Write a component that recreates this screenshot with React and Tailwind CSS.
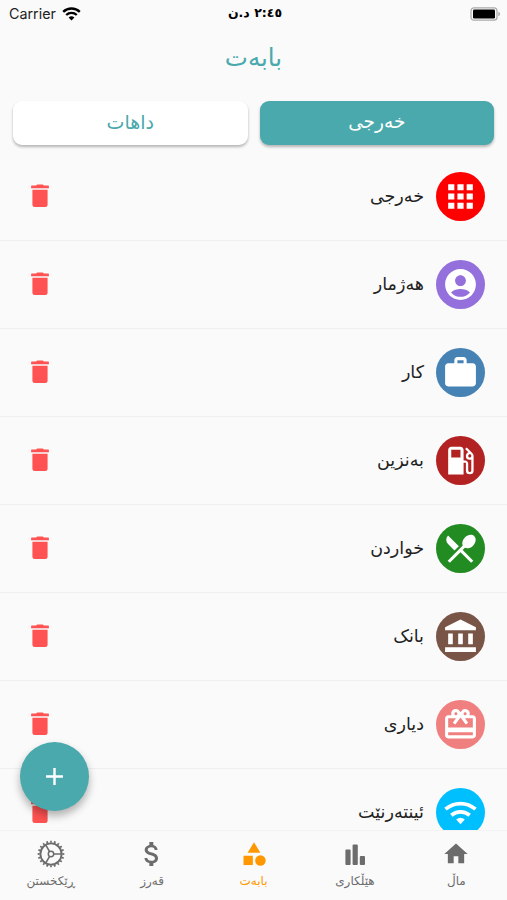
import {
  MdApps,
  MdAccountCircle,
  MdWork,
  MdLocalGasStation,
  MdRestaurantMenu,
  MdAccountBalance,
  MdCardGiftcard,
  MdHome,
  MdCategory,
  MdAdd,
  MdAttachMoney,
} from "react-icons/md";

function WifiIcon({ className }) {
  return (
    <svg className={className} viewBox="0 0 38 38" fill="none" stroke="currentColor" strokeWidth="3.8">
      <path d="M3.6 15.6a23.5 23.5 0 0 1 30.8 0" />
      <path d="M9.6 21.8a14.5 14.5 0 0 1 18.8 0" />
      <path d="M14.6 26.2a7 7 0 0 1 8.8 0L19 31z" fill="currentColor" stroke="none" />
    </svg>
  );
}

function BarsIcon({ className }) {
  return (
    <svg className={className} viewBox="0 0 28 28" fill="currentColor">
      <rect x="4.4" y="9.5" width="5.2" height="15.5" rx="1" />
      <rect x="11.6" y="4.5" width="5.2" height="20.5" rx="1" />
      <rect x="18.8" y="16" width="5.2" height="9" rx="1" />
    </svg>
  );
}

function TrashIcon({ className }) {
  return (
    <svg className={className} viewBox="0 0 30 30" fill="currentColor">
      <path d="M11.2 4.6q.3-1.2 1.5-1.2h4.6q1.2 0 1.5 1.2h4.5q.6 0 .6.6v2H6.1v-2q0-.6.6-.6z" />
      <path d="M7.4 8.7h15.2v14.9q0 2.5-2.5 2.5H9.9q-2.5 0-2.5-2.5z" />
    </svg>
  );
}

// thin gear: 20 teeth around a ring, three spokes
function GearIcon({ className }) {
  return (
    <svg className={className} viewBox="0 0 28 28" fill="none" stroke="currentColor">
      <circle cx="14" cy="14" r="12.3" strokeWidth="2" pathLength="40" strokeDasharray="0.9 1.1" strokeDashoffset="0.45" />
      <circle cx="14" cy="14" r="10.6" strokeWidth="1.9" />
      <circle cx="14" cy="14" r="2.7" strokeWidth="1.5" />
      <path d="M16.7 14h7.9M12.6 11.7l-3.9-6.9M12.6 16.3l-3.9 6.9" strokeWidth="1.6" />
    </svg>
  );
}

const categories = [
  { name: "خەرجی", color: "bg-[#ff0000]", Icon: MdApps },
  { name: "هەژمار", color: "bg-[#9370db]", Icon: MdAccountCircle },
  { name: "کار", color: "bg-[#4682b4]", Icon: MdWork },
  { name: "بەنزین", color: "bg-[#b22222]", Icon: MdLocalGasStation },
  { name: "خواردن", color: "bg-[#228b22]", Icon: MdRestaurantMenu },
  { name: "بانک", color: "bg-[#795548]", Icon: MdAccountBalance },
  { name: "دیاری", color: "bg-[#f08080]", Icon: MdCardGiftcard },
  { name: "ئینتەرنێت", color: "bg-[#00bfff]", Icon: WifiIcon },
];

const tabs = [
  { name: "ماڵ", Icon: MdHome },
  { name: "هێڵکاری", Icon: BarsIcon },
  { name: "بابەت", Icon: MdCategory, active: true },
  { name: "قەرز", Icon: MdAttachMoney, iconSize: "size-8 -my-0.5" },
  { name: "ڕێکخستن", Icon: GearIcon },
];

function StatusBar() {
  return (
    <div dir="ltr" className="grid h-[27px] shrink-0 grid-cols-3 items-center pr-[6px] pl-[9px] text-black">
      <div className="flex items-center gap-1.5 font-[Inter,sans-serif] text-[14.3px] text-[#222222]">
        <span>Carrier</span>
        <svg className="h-[14px] w-[19px] text-black" viewBox="0 0 19 14" fill="none" stroke="currentColor">
          <path d="M1.2 4.8a12 12 0 0 1 16.6 0" strokeWidth="2.4" />
          <path d="M4.2 8a7.6 7.6 0 0 1 10.6 0" strokeWidth="2.3" />
          <path d="M6.6 10.6a4.2 4.2 0 0 1 5.8 0L9.5 13.6z" fill="currentColor" stroke="none" />
        </svg>
      </div>
      <div dir="rtl" className="text-center text-[12.5px] font-bold">
        ٢:٤٥ د.ن
      </div>
      <svg className="h-[14px] w-[31px] justify-self-end" viewBox="0 0 31 14">
        <rect x="1" y="0.8" width="26" height="12.4" rx="3" fill="#fafafa" stroke="#a9a9a9" strokeWidth="1.2" />
        <rect x="3" y="2.5" width="22" height="9" rx="1.3" fill="#000" />
        <path d="M28.4 4.8c2.2.8 2.2 3.6 0 4.4z" fill="#a9a9a9" />
      </svg>
    </div>
  );
}

export default function App() {
  return (
    <div
      dir="rtl"
      className="relative flex h-[900px] w-[507px] flex-col overflow-hidden bg-[#fafafa] font-['DejaVu_Sans',sans-serif]"
    >
      <StatusBar />
      <h1 className="flex h-[63px] shrink-0 items-center justify-center text-[24.5px] text-[#4aa9ad]">
        بابەت
      </h1>

      <div className="flex shrink-0 gap-3 px-[13px] pt-[11px]">
        <button className="h-11 flex-1 rounded-[9px] bg-[#4aa9ad] pb-0.5 text-[18.5px] text-white shadow-[0_2px_3px_rgba(0,0,0,0.28)]">
          خەرجی
        </button>
        <button className="h-11 flex-1 rounded-[9px] bg-white pb-0.5 text-[19px] text-[#4aa9ad] shadow-[0_2px_3px_rgba(0,0,0,0.28)]">
          داهات
        </button>
      </div>

      <ul className="min-h-0 flex-1 overflow-hidden pt-2">
        {categories.map(({ name, color, Icon }) => (
          <li
            key={name}
            className="flex h-22 items-center border-b border-[#efefef] pr-[22px] pl-[25px]"
          >
            <span
              className={`flex size-[49px] items-center justify-center rounded-full text-white ${color}`}
            >
              <Icon className="size-[37px]" />
            </span>
            <span className="mr-3 flex-1 text-[17.5px] text-[#222222]">{name}</span>
            <TrashIcon className="mb-px size-[30px] text-[#ff5252]" />
          </li>
        ))}
      </ul>

      {/* bottom navigation */}
      <nav className="grid h-[70px] shrink-0 grid-cols-5 border-t border-[#f3f3f3] bg-[#fafafa]">
        {tabs.map(({ name, Icon, active, iconSize = "size-7" }) => (
          <div
            key={name}
            className={`flex flex-col items-center pt-[9px] ${
              active ? "text-[#ff9800]" : "text-[#6c6c6c]"
            }`}
          >
            <Icon className={`shrink-0 ${iconSize}`} />
            <span className="mt-[3px] text-[12px] leading-5">{name}</span>
          </div>
        ))}
      </nav>

      <button className="absolute top-[742px] left-[20px] flex size-[69px] items-center justify-center rounded-full bg-[#4aa9ad] text-white shadow-[0_5px_8px_rgba(0,0,0,0.3)]">
        <MdAdd className="size-[29px]" />
      </button>
    </div>
  );
}
